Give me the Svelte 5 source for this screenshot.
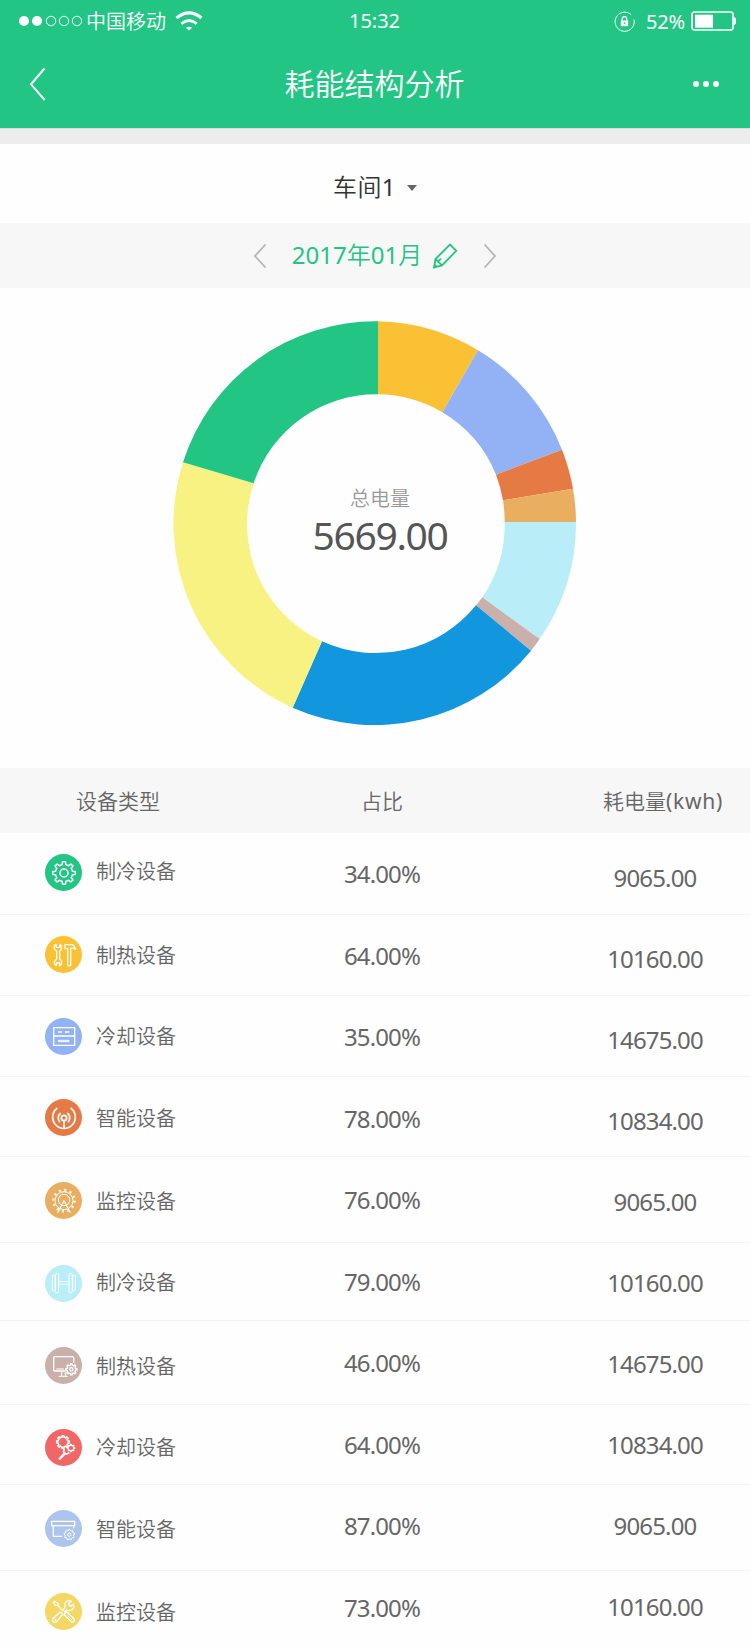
<script>
  // Corner points of every slice: [outer, inner], clockwise from the top
  const edges = [
    [[684, 64], [684, 283]],
    [[984, 151], [877, 337]],
    [[1236, 449], [1038, 524]],
    [[1269, 566], [1059, 601]],
    [[1278, 666], [1064, 666]],
    [[1169, 1017], [997, 892]],
    [[1143, 1052], [978, 916]],
    [[428, 1223], [516, 1024]],
    [[99, 487], [311, 550]],
  ];
  const colors = ['#fac135', '#92b2f5', '#e67a45', '#eaae60', '#b9eef9', '#cab0ab', '#1296dd', '#f7f281', '#22c584'];

  const slices = colors.map((color, i) => {
    const [o1, i1] = edges[i];
    const [o2, i2] = edges[(i + 1) % edges.length];
    return { color, d: `M${o1}A605.5 605.5 0 0 1 ${o2}L${i2}A387 387 0 0 0 ${i1}Z` };
  });

  // top: icon offset, name / p / k: vertical centre of each text in the row
  const rows = [
    { icon: 'gear',     color: '#22c584', label: '制冷设备', pct: '34.00%', kwh: '9065.00',  h: 82, top: 21, name: 39, p: 41.5, k: 45.5 },
    { icon: 'tools',    color: '#fac135', label: '制热设备', pct: '64.00%', kwh: '10160.00', h: 81, top: 21, name: 41, p: 41.5, k: 44.5 },
    { icon: 'drawer',   color: '#92b2f5', label: '冷却设备', pct: '35.00%', kwh: '14675.00', h: 81, top: 22, name: 41, p: 41.5, k: 44.5 },
    { icon: 'antenna',  color: '#e67a45', label: '智能设备', pct: '78.00%', kwh: '10834.00', h: 80, top: 22, name: 42, p: 42.5, k: 44.5 },
    { icon: 'wheel',    color: '#eaae60', label: '监控设备', pct: '76.00%', kwh: '9065.00',  h: 86, top: 25, name: 45, p: 43.5, k: 45.5 },
    { icon: 'dumbbell', color: '#b9eef9', label: '制冷设备', pct: '79.00%', kwh: '10160.00', h: 78, top: 22, name: 40, p: 39.5, k: 40.5 },
    { icon: 'monitor',  color: '#cab0ab', label: '制热设备', pct: '46.00%', kwh: '14675.00', h: 84, top: 26, name: 46, p: 42.5, k: 43.5 },
    { icon: 'repair',   color: '#f16765', label: '冷却设备', pct: '64.00%', kwh: '10834.00', h: 80, top: 24, name: 43, p: 40.5, k: 40.5 },
    { icon: 'box',      color: '#adc5ec', label: '智能设备', pct: '87.00%', kwh: '9065.00',  h: 86, top: 25, name: 45, p: 41.5, k: 41.5 },
    { icon: 'cross',    color: '#f5d765', label: '监控设备', pct: '73.00%', kwh: '10160.00', h: 79, top: 22, name: 42, p: 37.5, k: 36.5 },
  ];

  function gear(cx, cy, r, inner, n = 8) {
    const pts = [];
    const step = (Math.PI * 2) / n;
    for (let i = 0; i < n; i++) {
      const a = i * step - Math.PI / 2;
      for (const [k, rad] of [[-0.27, inner], [-0.17, r], [0.17, r], [0.27, inner]]) {
        pts.push(`${(cx + rad * Math.cos(a + k * step)).toFixed(1)} ${(cy + rad * Math.sin(a + k * step)).toFixed(1)}`);
      }
    }
    return `M${pts.join('L')}Z`;
  }
</script>

<div class="page">
  <header>
    <div class="status">
      <div class="side">
        <svg class="signal" width="64" height="12" viewBox="0 0 64 12">
          <circle cx="6" cy="6" r="5" fill="#fff" stroke="none" />
          <circle cx="19" cy="6" r="5" fill="#fff" stroke="none" />
          <circle cx="33" cy="6" r="4.7" />
          <circle cx="46" cy="6" r="4.7" />
          <circle cx="59" cy="6" r="4.7" />
        </svg>
        <span class="carrier">中国移动</span>
        <svg class="wifi" width="28" height="20" viewBox="0 0 28 20">
          <path d="M1.5 7Q14-3.2 26.5 7" stroke-width="3" />
          <path d="M6.3 12.8Q14 6.2 21.7 12.8" stroke-width="2.8" />
          <path d="M11 16.8Q14 14.8 17 16.8L14 19.6Z" fill="#fff" stroke="none" />
        </svg>
      </div>
      <span class="time">15:32</span>
      <div class="side end">
        <svg class="lock" width="21" height="21" viewBox="0 0 21 21">
          <path d="M17.2 3.7A9.6 9.6 0 1 0 20 8.5" />
          <rect x="6.8" y="9.5" width="7.4" height="5.7" fill="#fff" stroke="none" />
          <path d="M8.2 10V8A2.3 2.3 0 0 1 12.8 8V10" stroke-width="1.3" />
          <circle cx="10.5" cy="12.1" r="0.9" fill="#22c584" stroke="none" />
        </svg>
        <span class="charge">52%</span>
        <svg class="battery" width="46" height="22" viewBox="0 0 46 22">
          <rect x="2" y="2" width="41" height="18" rx="2.5" stroke-width="1.7" />
          <rect x="5" y="4.7" width="18" height="13" fill="#fff" stroke="none" />
          <path d="M44 7.5Q46 7.5 46 11T44 14.5Z" fill="#fff" />
        </svg>
      </div>
    </div>
    <div class="nav">
      <svg width="18" height="36" viewBox="0 0 18 36"><path d="M15.5 2.5L2 18.3L15.7 34" stroke-width="2" /></svg>
      <h1>耗能结构分析</h1>
      <svg width="28" height="8" viewBox="0 0 28 8">
        <circle cx="4" cy="4" r="3" />
        <circle cx="14" cy="4" r="3" />
        <circle cx="24" cy="4" r="3" />
      </svg>
    </div>
  </header>

  <div class="strip"></div>

  <div class="workshop">
    <span class="name">车间<b>1</b></span>
    <i class="caret"></i>
  </div>

  <div class="month">
    <svg class="arrow" width="14" height="26" viewBox="0 0 14 26"><path d="M12.5 1.5L2 13L12.5 24.5" /></svg>
    <span class="date"><b>2017</b>年<b>01</b>月</span>
    <svg class="pencil" width="26" height="26" viewBox="0 0 26 26">
      <path d="M2 24.5L3.5 16L18 1.6L24.3 7.8L10 22.4ZM3.5 16L10 22.4M6 18.5L9 15.6M2.4 21.5L5 24" />
    </svg>
    <svg class="arrow" width="14" height="26" viewBox="0 0 14 26"><path d="M1.5 1.5L12 13L1.5 24.5" /></svg>
  </div>

  <section class="chart">
    <svg class="donut" width="450" height="440" viewBox="0 0 1350 1320">
      {#each slices as s}
        <path d={s.d} fill={s.color} />
      {/each}
    </svg>
    <div class="total">
      <span class="caption">总电量</span>
      <strong>5669.00</strong>
    </div>
  </section>

  <div class="row head">
    <span class="type">设备类型</span>
    <span>占比</span>
    <span class="usage">耗电量<b class="unit">(kwh)</b></span>
  </div>

  {#each rows as r}
    <div class="row" style:height="{r.h}px">
      <div class="device">
        <svg class="icon" style:margin-top="{r.top}px" width="37" height="37" viewBox="0 0 111 111">
          <circle cx="55.5" cy="55.5" r="55.5" fill={r.color} stroke="none" />
          {#if r.icon === 'gear'}
            <path d={gear(57, 57, 34, 26)} stroke-width="4.5" />
            <circle cx="57" cy="57" r="12" stroke-width="4.5" />
          {:else if r.icon === 'tools'}
            <path d="M33 25Q25 30 28 38Q31 43 35 45V69Q27 73 28 81Q29 87 34 89V81H44V89Q50 86 50 79Q49 72 44 69V45Q51 41 50 34Q49 28 45 25V34H34Z" stroke-width="4" />
            <path d="M60 26H82Q90 30 92 40Q84 35 77 37V89H68V38H60Z" stroke-width="4" />
          {:else if r.icon === 'drawer'}
            <rect x="26" y="29" width="63" height="53" stroke-width="4" />
            <path d="M26 54H89M39 42H51M60 42H73" stroke-width="4" />
            <rect x="40" y="67" width="32" height="4" />
          {:else if r.icon === 'antenna'}
            <path d="M37 27A34 34 0 1 0 77 27" stroke-width="5" />
            <path d="M47 42A19 19 0 0 0 45 70M67 42A19 19 0 0 1 69 70M57 64V88" stroke-width="5" />
            <circle cx="57" cy="57" r="8" stroke-width="5" />
          {:else if r.icon === 'wheel'}
            <circle cx="57" cy="56" r="27" stroke-width="3" />
            <circle cx="57" cy="56" r="32" stroke-width="7" stroke-dasharray="6 10.75" />
            <circle cx="57" cy="54" r="17" stroke-width="3" />
            <path d="M38 92L57 56L76 92" stroke-width="3.5" />
          {:else if r.icon === 'dumbbell'}
            <rect x="22" y="31" width="8" height="46" rx="3" />
            <rect x="31" y="25" width="10" height="58" rx="4" />
            <rect x="41" y="50" width="31" height="8" stroke-width="2.5" />
            <rect x="72" y="25" width="10" height="58" rx="4" />
            <rect x="83" y="31" width="8" height="46" rx="3" />
          {:else if r.icon === 'monitor'}
            <path d="M60 72H30Q26 72 26 68V33Q26 29 30 29H82Q86 29 86 33V47" stroke-width="4" />
            <path d="M50 73V87M61 73V87M41 88H68M34 66H57" />
            <path d={gear(79, 67, 17, 13)} stroke-width="4" />
            <circle cx="79" cy="67" r="5" stroke-width="4" />
          {:else if r.icon === 'repair'}
            <path d={gear(54, 39, 19, 15)} stroke-width="5" />
            <path d={gear(78, 57, 11, 8)} stroke-width="3.5" />
            <path d="M42 91L60 73" stroke-width="7" />
            <path d="M58 60Q53 67 59 73Q66 77 73 71" stroke-width="5" />
          {:else if r.icon === 'box'}
            <rect x="20" y="34" width="69" height="13" stroke-width="4" />
            <path d="M25 48V79H51M86 48V55" stroke-width="4" />
            <path d={gear(73, 74, 16, 13, 9)} stroke-width="3" />
            <circle cx="73" cy="74" r="5" />
          {:else}
            <path d="M25 27L31 25L39 32L37 38L31 37ZM38 36L50 50" stroke-width="4" />
            <path d="M57 65L65 56L88 79Q90 87 81 88Z" stroke-width="4" />
            <path d="M68 68L81 81" />
            <path d="M51 53L60 44Q56 30 67 24Q74 21 79 25L70 33L76 40L86 34Q89 47 77 52Q69 54 65 51L57 58M46 57L53 64L35 86Q29 90 24 86Q20 81 25 76Z" stroke-width="4" />
            <circle cx="31" cy="81" r="1.5" />
          {/if}
        </svg>
        <span class="label" style:margin-top="{r.name - 15}px">{r.label}</span>
      </div>
      <span class="num" style:margin-top="{r.p - 17.5}px">{r.pct}</span>
      <span class="num kwh" style:margin-top="{r.k - 17.5}px">{r.kwh}</span>
    </div>
  {/each}
</div>

<style>
  :global(body) {
    margin: 0;
    background: #fefefe;
  }

  .page {
    width: 750px;
    height: 1650px;
    overflow: hidden;
    color: #666;
    font-family: "Noto Sans", "Noto Sans CJK SC", sans-serif;
    font-weight: 350;
  }

  /* Latin and digits run one step heavier than the Chinese text */
  b { font-weight: 400; }

  svg {
    display: block;
    flex-shrink: 0;
  }

  header {
    height: 128px;
    background: #22c584;
    color: #fff;
  }

  header svg {
    stroke: #fff;
    fill: none;
  }

  .status {
    display: grid;
    grid-template-columns: 1fr auto 1fr;
    align-items: center;
    height: 42px;
    padding: 0 14px 0 18px;
    font-size: 20px;
    font-weight: 400;
    line-height: 30px;
  }

  .side {
    display: flex;
    align-items: center;
  }

  .end { justify-content: flex-end; }

  .carrier {
    margin: 1px 0 0 4px;
    font-weight: 350;
  }

  .wifi { margin-left: 9px; }

  .time {
    margin: -1px 5px 0 0;
  }

  .charge {
    margin: 1px 5px 0 11px;
    letter-spacing: -0.2px;
  }

  .nav {
    display: flex;
    justify-content: space-between;
    align-items: center;
    height: 84px;
    padding: 0 30px 0 29px;
  }

  .nav svg:last-child {
    fill: #fff;
    stroke: none;
  }

  h1 {
    margin: 0 0 0 10px;
    font-size: 30px;
    font-weight: 350;
    line-height: 44px;
  }

  .strip {
    box-sizing: border-box;
    height: 16px;
    border-top: 1px solid #dcdcdc;
    background: #ededed;
  }

  .workshop {
    display: flex;
    justify-content: center;
    align-items: center;
    height: 79px;
    padding-top: 7px;
    box-sizing: border-box;
    gap: 11px;
    color: #333;
    font-size: 24px;
  }

  .name {
    margin-top: -3px;
    letter-spacing: 0.4px;
  }

  .caret {
    margin-top: 2px;
    border: 5.5px solid transparent;
    border-top: 6px solid #666;
    border-bottom: 0;
  }

  .month {
    display: flex;
    justify-content: center;
    align-items: center;
    height: 65px;
    background: #f7f7f7;
    color: #22c584;
    font-size: 24px;
  }

  .month svg {
    fill: none;
    stroke: #22c584;
    stroke-width: 1.8;
  }

  .month .arrow { stroke: #b5b5b5; }

  .date {
    margin: -5px 10px 0 25px;
  }

  .pencil { margin-right: 25px; }

  .chart {
    display: grid;
    justify-content: center;
    height: 480px;
    padding-top: 12px;
    box-sizing: border-box;
  }

  .donut,
  .total {
    grid-area: 1 / 1;
  }

  .total {
    display: flex;
    flex-direction: column;
    align-items: center;
    padding: 186px 0 0 10px;
  }

  .caption {
    color: #999;
    font-size: 20px;
    line-height: 26px;
  }

  .total strong {
    color: #555;
    font-size: 39px;
    font-weight: 400;
    line-height: 46px;
    letter-spacing: -1.3px;
  }

  .row {
    display: grid;
    grid-template-columns: 250px 264px 236px;
    align-items: start;
    justify-items: center;
    box-sizing: border-box;
    border-bottom: 1px solid #f3f3f3;
  }

  .row:last-child { border-bottom: 0; }

  .head {
    align-items: center;
    height: 65px;
    border: 0;
    background: #f7f7f7;
    font-size: 21px;
    line-height: 30px;
  }

  .type { margin-right: 14px; }

  .usage { margin-left: 62px; }

  .unit { letter-spacing: 0.7px; }

  .device {
    display: flex;
    align-items: flex-start;
    justify-self: start;
    padding-left: 45px;
    gap: 14px;
  }

  .icon {
    fill: none;
    stroke: #fff;
    stroke-width: 3;
    stroke-linejoin: round;
  }

  .label {
    font-size: 20px;
    line-height: 30px;
  }

  .num {
    font-size: 24px;
    font-weight: 400;
    line-height: 34px;
    letter-spacing: -0.85px;
  }

  .kwh { margin-left: 46px; }
</style>
